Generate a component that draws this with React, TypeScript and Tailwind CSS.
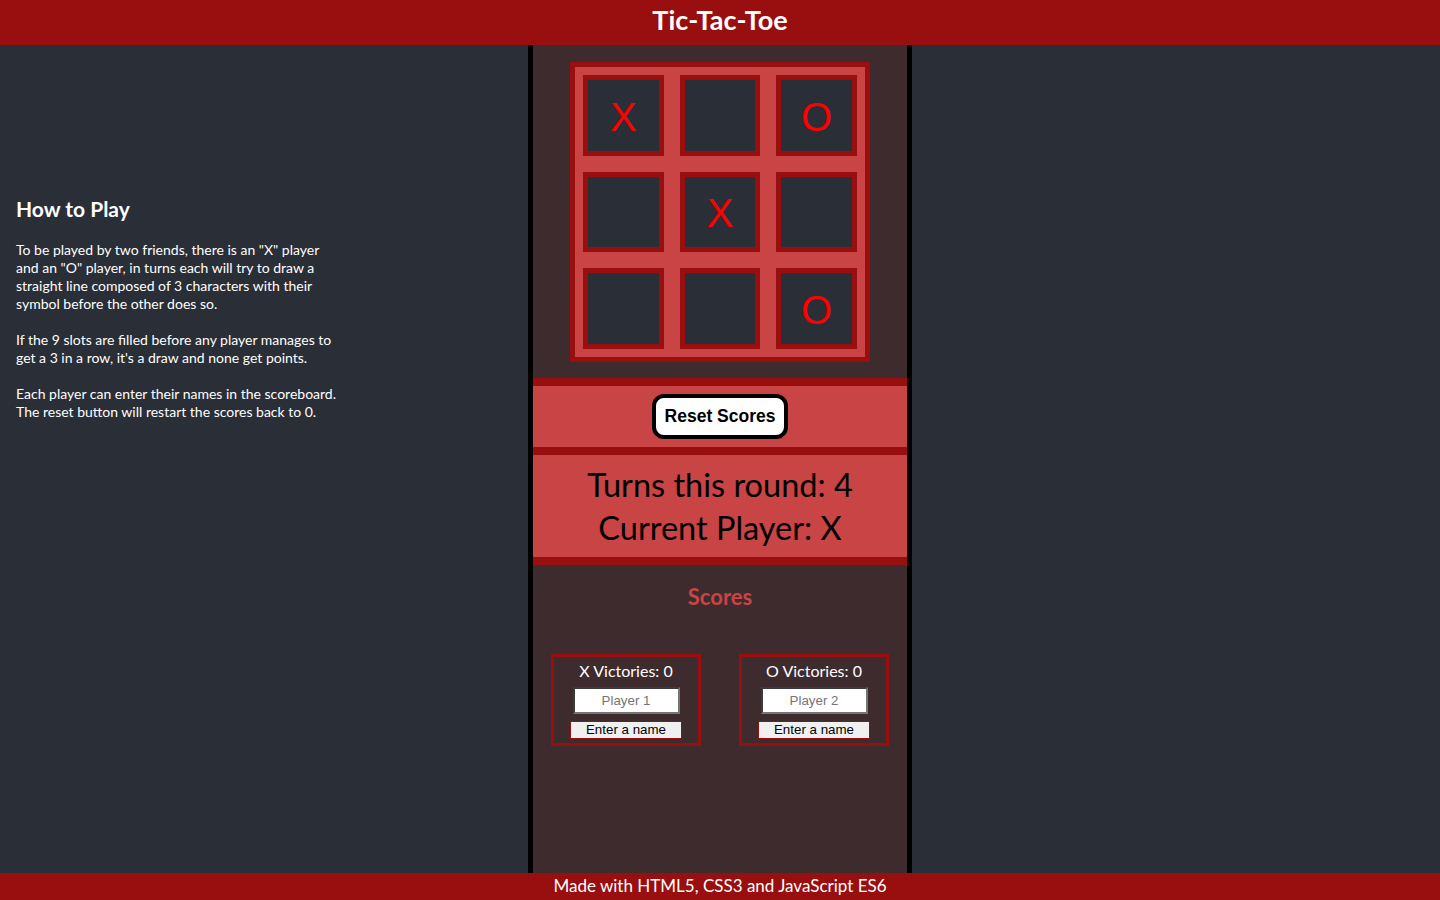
import React from "react";

const board: string[] = ["X", "", "O", "", "X", "", "", "", "O"];

const ScoreCard: React.FC<{ symbol: string; placeholder: string }> = ({ symbol, placeholder }) => (
  <div className="flex w-[150px] flex-col items-center border-[3px] border-[#990e0e] pt-1 pb-1">
    <p className="text-[16px] leading-[20px] text-white">{symbol} Victories: 0</p>
    <input
      type="text"
      placeholder={placeholder}
      className="mt-[6px] h-[27px] w-[107px] border-2 border-t-[#3b3b3b] border-l-[#3b3b3b] border-r-[#767676] border-b-[#767676] bg-white text-center font-['Liberation_Sans',Arial,sans-serif] text-[13.33px] text-black placeholder:text-[#757575]"
    />
    <button
      type="button"
      className="mt-[7px] h-[18px] w-[112px] border border-[#990e0e] bg-[#f0f0f0] font-['Liberation_Sans',Arial,sans-serif] text-[13.33px] leading-[16px] text-black"
    >
      Enter a name
    </button>
  </div>
);

export default function App() {
  return (
    <div className="flex h-screen flex-col bg-[#2a2e36] font-['Lato',sans-serif]">
      {/* header */}
      <header className="flex h-[45px] shrink-0 items-center justify-center bg-[#990e0e] pb-1">
        <h1 className="text-[27px] font-bold text-white">Tic-Tac-Toe</h1>
      </header>

      <main className="flex min-h-0 flex-1">
        {/* rules */}
        <aside className="flex-1 text-white">
          <div className="px-4 pt-[151px]">
            <h2 className="text-[21px] font-bold leading-[26px]">How to Play</h2>
            <div className="mt-[19px] w-[325px] space-y-[18px] text-[14px] leading-[18px]">
              <p>
                To be played by two friends, there is an "X" player and an "O" player, in turns each will try to
                draw a straight line composed of 3 characters with their symbol before the other does so.
              </p>
              <p>
                If the 9 slots are filled before any player manages to get a 3 in a row, it's a draw and none get
                points.
              </p>
              <p>
                Each player can enter their names in the scoreboard. The reset button will restart the scores
                back to 0.
              </p>
            </div>
          </div>
        </aside>

        {/* game column */}
        <section className="flex w-[384px] shrink-0 flex-col border-x-[5px] border-black bg-[#3e2b2d] pt-[17px]">
          <div className="mx-auto h-[300px] w-[300px] border-[5px] border-[#990e0e] bg-[#c94444] p-2">
            <div className="grid h-full grid-cols-3 grid-rows-3 gap-4">
              {board.map((mark, i) => (
                <div
                  key={i}
                  className="flex items-center justify-center border-[5px] border-[#990e0e] bg-[#2a2e36] pt-[3px] font-['Liberation_Sans',Arial,sans-serif] text-[40px] leading-none text-[#f00]"
                >
                  {mark}
                </div>
              ))}
            </div>
          </div>

          <div className="mt-4 border-y-8 border-[#990e0e] bg-[#c94444]">
            <div className="flex h-[61px] items-center justify-center">
              <button
                type="button"
                className="h-[45px] w-[136px] rounded-[12px] border-4 border-black bg-white font-['Liberation_Sans',Arial,sans-serif] text-[17.5px] font-bold text-black"
              >
                Reset Scores
              </button>
            </div>
            <div className="flex h-[110px] flex-col items-center justify-center border-t-8 border-[#990e0e] text-[32.5px] leading-[43px] text-black">
              <p>Turns this round: 4</p>
              <p>Current Player: X</p>
            </div>
          </div>

          <h3 className="mt-[19px] text-center text-[22px] font-bold leading-[26px] text-[#c94444]">Scores</h3>

          <div className="mt-[44px] flex justify-center gap-[38px]">
            <ScoreCard symbol="X" placeholder="Player 1" />
            <ScoreCard symbol="O" placeholder="Player 2" />
          </div>
        </section>

        <div className="flex-1" />
      </main>

      <footer className="flex h-[27px] shrink-0 items-center justify-center bg-[#990e0e] pb-[2px] text-[17px] text-white">
        Made with HTML5, CSS3 and JavaScript ES6
      </footer>
    </div>
  );
}
